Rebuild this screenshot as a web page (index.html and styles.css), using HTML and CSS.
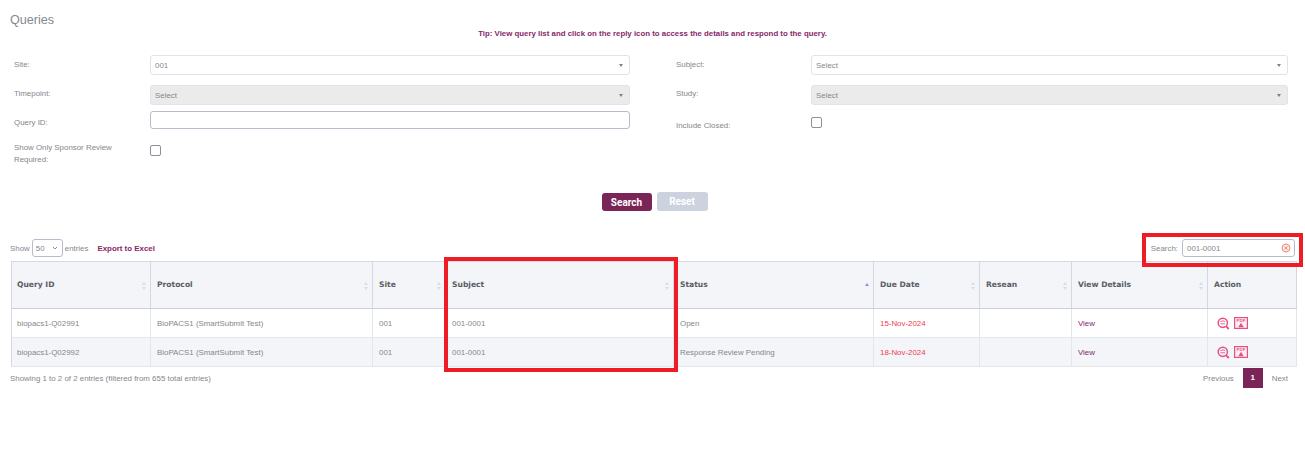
FILE: index.html
```html
<!DOCTYPE html>
<html lang="en">
<head>
    <meta charset="UTF-8">
    <meta name="viewport" content="width=device-width, initial-scale=1.0">
    <title>Queries</title>
    <link rel="stylesheet" href="styles.css">
</head>
<body>
    <h1 class="page-title">Queries</h1>
    <p class="tip">Tip: View query list and click on the reply icon to access the details and respond to the query.</p>

    <div class="filters">
        <div class="filter-row row-one">
            <label class="field-label">Site:</label>
            <div class="select"><span>001</span><i class="caret"></i></div>
            <label class="field-label second">Subject:</label>
            <div class="select"><span>Select</span><i class="caret"></i></div>
        </div>
        <div class="filter-row row-two">
            <label class="field-label timepoint-label">Timepoint:</label>
            <div class="select disabled"><span>Select</span><i class="caret"></i></div>
            <label class="field-label second timepoint-label">Study:</label>
            <div class="select disabled"><span>Select</span><i class="caret"></i></div>
        </div>
        <div class="filter-row row-three">
            <label class="field-label query-label">Query ID:</label>
            <div class="text-input"></div>
            <label class="field-label second closed-label">Include Closed:</label>
            <div class="check closed-check"></div>
        </div>
        <div class="filter-row row-four">
            <label class="field-label sponsor-label">Show Only Sponsor Review Required:</label>
            <div class="check sponsor-check"></div>
        </div>
    </div>

    <div class="buttons">
        <button class="btn btn-search">Search</button>
        <button class="btn btn-reset">Reset</button>
    </div>

    <div class="table-top">
        <div class="length">
            Show <span class="length-select">50<svg width="6" height="4" viewBox="0 0 6 4"><path d="M1 1l2 2 2-2" fill="none" stroke="#777" stroke-width="0.8"/></svg></span> entries
            <a class="export">Export to Excel</a>
        </div>
        <div class="table-search">
            Search:
            <div class="search-box">
                <span>001-0001</span>
                <svg width="10" height="10" viewBox="0 0 10 10"><circle cx="5" cy="5" r="4" fill="#fde8e2" stroke="#f08f80" stroke-width="1"/><path d="M3.5 3.5l3 3M6.5 3.5l-3 3" stroke="#ee7f70" stroke-width="0.9"/></svg>
            </div>
        </div>
    </div>

    <table class="queries">
        <colgroup>
            <col class="c-id"><col class="c-protocol"><col class="c-site"><col class="c-subject"><col class="c-status"><col class="c-due"><col class="c-reason"><col class="c-view"><col class="c-action">
        </colgroup>
        <thead>
            <tr>
                <th class="sort">Query ID</th>
                <th class="sort">Protocol</th>
                <th class="sort">Site</th>
                <th class="sort">Subject</th>
                <th class="sort asc">Status</th>
                <th class="sort">Due Date</th>
                <th class="sort">Resean</th>
                <th class="sort">View Details</th>
                <th>Action</th>
            </tr>
        </thead>
        <tbody>
            <tr>
                <td>biopacs1-Q02991</td>
                <td>BioPACS1 (SmartSubmit Test)</td>
                <td>001</td>
                <td>001-0001</td>
                <td>Open</td>
                <td class="due">15-Nov-2024</td>
                <td></td>
                <td><a class="view">View</a></td>
                <td class="actions">
                    <svg width="13" height="13" viewBox="0 0 13 13"><circle cx="5.8" cy="5.8" r="4.6" fill="none" stroke="#e8517f" stroke-width="1.5"/><path d="M3.4 4.6q2.4-1.4 4.8 0M3.6 6.8h4.4" fill="none" stroke="#e8517f" stroke-width="0.9"/><path d="M9 9.2l2.8 2.8" stroke="#e8517f" stroke-width="1.8"/></svg>
                    <svg width="14" height="12" viewBox="0 0 14 12"><rect x="0.6" y="0.6" width="12.8" height="10.8" fill="#fdeef3" stroke="#e8517f" stroke-width="1.2"/><text x="7" y="5.4" text-anchor="middle" class="pdf-text">PDF</text><path d="M7 5.8l2.8 4.4H4.2z" fill="#e8517f"/></svg>
                </td>
            </tr>
            <tr class="even">
                <td>biopacs1-Q02992</td>
                <td>BioPACS1 (SmartSubmit Test)</td>
                <td>001</td>
                <td>001-0001</td>
                <td>Response Review Pending</td>
                <td class="due">18-Nov-2024</td>
                <td></td>
                <td><a class="view">View</a></td>
                <td class="actions">
                    <svg width="13" height="13" viewBox="0 0 13 13"><circle cx="5.8" cy="5.8" r="4.6" fill="none" stroke="#e8517f" stroke-width="1.5"/><path d="M3.4 4.6q2.4-1.4 4.8 0M3.6 6.8h4.4" fill="none" stroke="#e8517f" stroke-width="0.9"/><path d="M9 9.2l2.8 2.8" stroke="#e8517f" stroke-width="1.8"/></svg>
                    <svg width="14" height="12" viewBox="0 0 14 12"><rect x="0.6" y="0.6" width="12.8" height="10.8" fill="#fdeef3" stroke="#e8517f" stroke-width="1.2"/><text x="7" y="5.4" text-anchor="middle" class="pdf-text">PDF</text><path d="M7 5.8l2.8 4.4H4.2z" fill="#e8517f"/></svg>
                </td>
            </tr>
        </tbody>
    </table>

    <div class="table-bottom">
        <div class="info">Showing 1 to 2 of 2 entries (filtered from 655 total entries)</div>
        <div class="paging">
            <span>Previous</span>
            <span class="current">1</span>
            <span>Next</span>
        </div>
    </div>

    <div class="callout callout-subject"></div>
    <div class="callout callout-search"></div>
</body>
</html>
```

FILE: styles.css
```css
body {
    margin: 0;
    position: relative;
    width: 1305px;
    height: 470px;
    overflow: hidden;
    background: #fff;
    font-family: "Liberation Sans", Arial, sans-serif;
    font-size: 7.9px;
    color: #85878b;
}

.page-title {
    margin: 0;
    padding: 12px 0 0 10px;
    height: 16px;
    font-size: 12.6px;
    line-height: 16px;
    font-weight: normal;
    color: #85898f;
}

.tip {
    margin: 0;
    padding-top: 1px;
    height: 10px;
    line-height: 10px;
    text-align: center;
    font-size: 7.85px;
    font-weight: bold;
    color: #87276a;
}

.filters {
    margin-top: 16px;
    padding-left: 14px;
}

.filter-row {
    display: grid;
    grid-template-columns: 136px 480px 46px 135px 477px;
}

.row-one { height: 30px; }
.row-two { height: 26px; }
.row-three { height: 34px; }
.row-four { height: 47px; }

.field-label {
    line-height: 20px;
    grid-column: 1;
}

.field-label.second {
    grid-column: 4;
}

.timepoint-label {
    margin-top: -1px;
}

.query-label {
    margin-top: 2px;
}

.select {
    height: 20px;
    box-sizing: border-box;
    display: flex;
    justify-content: space-between;
    align-items: center;
    padding: 0 6px 0 4px;
    background: #fff;
    border: 1px solid #e1e3e8;
    border-radius: 3px;
}

.select.disabled {
    background: #ebebeb;
}

.caret {
    width: 0;
    height: 0;
    border-left: 2px solid transparent;
    border-right: 2px solid transparent;
    border-top: 3px solid #808080;
}

.text-input {
    height: 18px;
    box-sizing: border-box;
    border: 1px solid #b7bccb;
    border-radius: 3px;
}

.check {
    width: 11px;
    height: 11px;
    box-sizing: border-box;
    border: 1px solid #8b8f99;
    border-radius: 2px;
    background: #fff;
}

.closed-check {
    margin-top: 6px;
}

.closed-label {
    line-height: 30px;
}

.sponsor-label {
    width: 100px;
    line-height: 12px;
    margin-top: -3px;
}

.buttons {
    display: flex;
    justify-content: center;
    gap: 5px;
    height: 19px;
    margin-left: 4px;
}

.btn {
    padding: 0;
    border: 0;
    border-radius: 3px;
    height: 18px;
    font-family: "Roboto", "Liberation Sans", sans-serif;
    font-size: 10px;
    font-weight: bold;
    color: #fff;
}

.btn-search {
    width: 50px;
    margin-top: 1px;
    background: #7b2458;
}

.btn-reset {
    width: 51px;
    height: 19px;
    background: #ccd3df;
}

.table-top {
    display: flex;
    justify-content: space-between;
    align-items: center;
    height: 20px;
    margin: 27px 10px 0 10px;
}

.length {
    display: flex;
    align-items: center;
    gap: 2px;
}

.length-select {
    display: inline-flex;
    justify-content: space-between;
    align-items: center;
    width: 31px;
    height: 18px;
    box-sizing: border-box;
    padding: 0 4px 0 3px;
    border: 1px solid #b7bccb;
    border-radius: 3px;
}

.export {
    margin-left: 7px;
    font-weight: bold;
    color: #87276a;
}

.table-search {
    display: flex;
    align-items: center;
    gap: 4px;
}

.search-box {
    display: flex;
    justify-content: space-between;
    align-items: center;
    width: 113px;
    height: 18px;
    box-sizing: border-box;
    padding: 0 3px 0 4px;
    border: 1px solid #b7bccb;
    border-radius: 3px;
}

.queries {
    margin: 3px 0 0 11px;
    width: 1285px;
    table-layout: fixed;
    border-collapse: collapse;
    border: 1px solid #d5d8e2;
}

.c-id { width: 139px; }
.c-protocol { width: 222px; }
.c-site { width: 73px; }
.c-subject { width: 228px; }
.c-status { width: 200px; }
.c-due { width: 106px; }
.c-reason { width: 92px; }
.c-view { width: 136px; }
.c-action { width: 89px; }

.queries th {
    position: relative;
    height: 47px;
    box-sizing: border-box;
    padding: 0 6px 2px;
    background: #f3f5f9;
    border-right: 1px solid #d5d8e2;
    border-bottom: 1px solid #ccd0dc;
    text-align: left;
    font-family: "DejaVu Sans", sans-serif;
    font-size: 7.6px;
    font-weight: bold;
    color: #5a5d63;
}

.queries th:first-child,
.queries td:first-child {
    padding-left: 5px;
}

.queries th.sort::before,
.queries th.sort::after {
    content: "";
    position: absolute;
    right: 4px;
    width: 0;
    height: 0;
    border-left: 2.5px solid transparent;
    border-right: 2.5px solid transparent;
}

.queries th.sort::before {
    top: 20px;
    border-bottom: 3.5px solid #dcdde1;
}

.queries th.sort::after {
    top: 25px;
    border-top: 3.5px solid #dcdde1;
}

.queries th.asc::before {
    top: 21px;
    border-bottom-color: #8f8fdc;
}

.queries th.asc::after {
    display: none;
}

.queries td {
    height: 29px;
    box-sizing: border-box;
    padding: 0 6px;
    border-right: 1px solid #e3e6ec;
    border-bottom: 1px solid #e3e6ec;
    white-space: nowrap;
}

.even td {
    background: #f3f5f9;
}

.queries td.due {
    color: #f0404f;
}

.view {
    color: #87276a;
}

.queries td.actions {
    padding-left: 9px;
}

.actions svg {
    vertical-align: middle;
    margin-right: 2px;
}

.pdf-text {
    font-family: "Liberation Sans", sans-serif;
    font-size: 4.4px;
    font-weight: bold;
    fill: #e8517f;
}

.table-bottom {
    display: flex;
    justify-content: space-between;
    margin: 1px 17px 0 10px;
}

.info {
    padding-top: 5px;
    line-height: 11px;
}

.paging {
    display: flex;
    align-items: center;
    gap: 9px;
}

.current {
    width: 20px;
    height: 20px;
    line-height: 20px;
    text-align: center;
    font-weight: bold;
    color: #fff;
    background: #7b2458;
}

.callout {
    position: absolute;
    box-sizing: border-box;
    border: 4px solid #ee1c25;
}

.callout-subject {
    left: 444px;
    top: 257px;
    width: 234px;
    height: 115px;
}

.callout-search {
    left: 1142px;
    top: 233px;
    width: 161px;
    height: 34px;
}
```
